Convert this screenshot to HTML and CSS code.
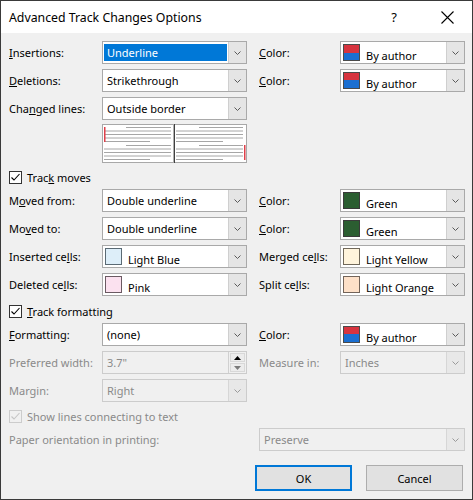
FILE: index.html
```html
<!DOCTYPE html>
<html>
<head>
<meta charset="utf-8">
<link rel="stylesheet" href="styles.css">
</head>
<body>
<div class="win">
  <div class="titlebar">
    <span class="title">Advanced Track Changes Options</span>
    <span class="help">?</span>
    <span class="close"><svg width="13" height="13" viewBox="0 0 13 13"><path d="M0.5 0.5 L12.5 12.5 M12.5 0.5 L0.5 12.5" stroke="#000" stroke-width="1.1" fill="none"/></svg></span>
  </div>
  <div class="content">
    <div class="grid">
      <span class="lbl"><u>I</u>nsertions:</span>
      <div class="sel"><span class="val"><span class="hl">Underline</span></span><span class="btn"><svg class="chev" width="7" height="4" viewBox="0 0 7 4"><polyline points="0.5,0.5 3.5,3.5 6.5,0.5"/></svg></span></div>
      <span class="lbl r"><u>C</u>olor:</span>
      <div class="sel"><span class="val c"><span class="sw author"></span><span class="cname">By author</span></span><span class="btn"><svg class="chev" width="7" height="4" viewBox="0 0 7 4"><polyline points="0.5,0.5 3.5,3.5 6.5,0.5"/></svg></span></div>

      <span class="lbl"><u>D</u>eletions:</span>
      <div class="sel"><span class="val">Strikethrough</span><span class="btn"><svg class="chev" width="7" height="4" viewBox="0 0 7 4"><polyline points="0.5,0.5 3.5,3.5 6.5,0.5"/></svg></span></div>
      <span class="lbl r"><u>C</u>olor:</span>
      <div class="sel"><span class="val c"><span class="sw author"></span><span class="cname">By author</span></span><span class="btn"><svg class="chev" width="7" height="4" viewBox="0 0 7 4"><polyline points="0.5,0.5 3.5,3.5 6.5,0.5"/></svg></span></div>

      <span class="lbl">Cha<u>n</u>ged lines:</span>
      <div class="sel"><span class="val">Outside border</span><span class="btn"><svg class="chev" width="7" height="4" viewBox="0 0 7 4"><polyline points="0.5,0.5 3.5,3.5 6.5,0.5"/></svg></span></div>
    </div>

    <div class="preview">
      <svg width="145" height="39" viewBox="0 0 145 39">
        <rect x="0.5" y="0.5" width="144" height="38" fill="#fff" stroke="#a8a8a8"/>
        <line x1="71.5" y1="0" x2="71.5" y2="39" stroke="#b0b0b0"/>
        <line x1="72.5" y1="0" x2="72.5" y2="39" stroke="#404040"/>
        <g stroke="#a6a6a6" stroke-width="1">
          <line x1="24" y1="3.5" x2="69" y2="3.5"/>
          <line x1="2" y1="7" x2="69" y2="7"/>
          <line x1="2" y1="10.5" x2="69" y2="10.5"/>
          <line x1="2" y1="14" x2="69" y2="14"/>
          <line x1="2" y1="17.5" x2="48" y2="17.5"/>
          <line x1="24" y1="21.5" x2="69" y2="21.5"/>
          <line x1="2" y1="25" x2="69" y2="25"/>
          <line x1="2" y1="28.5" x2="69" y2="28.5"/>
          <line x1="2" y1="32" x2="69" y2="32"/>
          <line x1="2" y1="35.5" x2="48" y2="35.5"/>

          <line x1="97" y1="3.5" x2="141" y2="3.5"/>
          <line x1="74" y1="7" x2="141" y2="7"/>
          <line x1="74" y1="10.5" x2="141" y2="10.5"/>
          <line x1="74" y1="14" x2="141" y2="14"/>
          <line x1="74" y1="17.5" x2="121" y2="17.5"/>
          <line x1="97" y1="21.5" x2="141" y2="21.5"/>
          <line x1="74" y1="25" x2="141" y2="25"/>
          <line x1="74" y1="28.5" x2="141" y2="28.5"/>
          <line x1="74" y1="32" x2="141" y2="32"/>
          <line x1="74" y1="35.5" x2="121" y2="35.5"/>
        </g>
        <rect x="2" y="3" width="1.5" height="15" fill="#e0404a"/>
        <rect x="142" y="21" width="1.5" height="15" fill="#e0404a"/>
      </svg>
    </div>

    <div class="check"><span class="cb"><svg width="11" height="11" viewBox="0 0 11 11"><polyline points="1.5,5.5 4,8 9.5,2" fill="none" stroke="#000" stroke-width="1.1"/></svg></span><span>Trac<u>k</u> moves</span></div>

    <div class="grid g2">
      <span class="lbl">M<u>o</u>ved from:</span>
      <div class="sel"><span class="val">Double underline</span><span class="btn"><svg class="chev" width="7" height="4" viewBox="0 0 7 4"><polyline points="0.5,0.5 3.5,3.5 6.5,0.5"/></svg></span></div>
      <span class="lbl r"><u>C</u>olor:</span>
      <div class="sel"><span class="val c"><span class="sw green"></span><span class="cname">Green</span></span><span class="btn"><svg class="chev" width="7" height="4" viewBox="0 0 7 4"><polyline points="0.5,0.5 3.5,3.5 6.5,0.5"/></svg></span></div>

      <span class="lbl">Mo<u>v</u>ed to:</span>
      <div class="sel"><span class="val">Double underline</span><span class="btn"><svg class="chev" width="7" height="4" viewBox="0 0 7 4"><polyline points="0.5,0.5 3.5,3.5 6.5,0.5"/></svg></span></div>
      <span class="lbl r"><u>C</u>olor:</span>
      <div class="sel"><span class="val c"><span class="sw green"></span><span class="cname">Green</span></span><span class="btn"><svg class="chev" width="7" height="4" viewBox="0 0 7 4"><polyline points="0.5,0.5 3.5,3.5 6.5,0.5"/></svg></span></div>

      <span class="lbl">Inserted ce<u>l</u>ls:</span>
      <div class="sel"><span class="val c"><span class="sw lblue"></span><span class="cname">Light Blue</span></span><span class="btn"><svg class="chev" width="7" height="4" viewBox="0 0 7 4"><polyline points="0.5,0.5 3.5,3.5 6.5,0.5"/></svg></span></div>
      <span class="lbl r">Merged ce<u>l</u>ls:</span>
      <div class="sel"><span class="val c"><span class="sw lyellow"></span><span class="cname">Light Yellow</span></span><span class="btn"><svg class="chev" width="7" height="4" viewBox="0 0 7 4"><polyline points="0.5,0.5 3.5,3.5 6.5,0.5"/></svg></span></div>

      <span class="lbl">Deleted ce<u>l</u>ls:</span>
      <div class="sel"><span class="val c"><span class="sw pink"></span><span class="cname">Pink</span></span><span class="btn"><svg class="chev" width="7" height="4" viewBox="0 0 7 4"><polyline points="0.5,0.5 3.5,3.5 6.5,0.5"/></svg></span></div>
      <span class="lbl r">Split ce<u>l</u>ls:</span>
      <div class="sel"><span class="val c"><span class="sw lorange"></span><span class="cname">Light Orange</span></span><span class="btn"><svg class="chev" width="7" height="4" viewBox="0 0 7 4"><polyline points="0.5,0.5 3.5,3.5 6.5,0.5"/></svg></span></div>
    </div>

    <div class="check tf"><span class="cb"><svg width="11" height="11" viewBox="0 0 11 11"><polyline points="1.5,5.5 4,8 9.5,2" fill="none" stroke="#000" stroke-width="1.1"/></svg></span><span><u>T</u>rack formatting</span></div>

    <div class="grid g3">
      <span class="lbl"><u>F</u>ormatting:</span>
      <div class="sel"><span class="val">(none)</span><span class="btn"><svg class="chev" width="7" height="4" viewBox="0 0 7 4"><polyline points="0.5,0.5 3.5,3.5 6.5,0.5"/></svg></span></div>
      <span class="lbl r"><u>C</u>olor:</span>
      <div class="sel"><span class="val c"><span class="sw author"></span><span class="cname">By author</span></span><span class="btn"><svg class="chev" width="7" height="4" viewBox="0 0 7 4"><polyline points="0.5,0.5 3.5,3.5 6.5,0.5"/></svg></span></div>

      <span class="lbl dis">Preferred width:</span>
      <div class="sel disabled"><span class="val">3.7"</span><span class="spin"><span class="up"><svg width="7" height="4" viewBox="0 0 7 4"><polygon points="0,4 3.5,0 7,4" fill="#000"/></svg></span><span class="dn"><svg width="7" height="4" viewBox="0 0 7 4"><polygon points="0,0 3.5,4 7,0" fill="#7a7a7a"/></svg></span></span></div>
      <span class="lbl r dis">Measure in:</span>
      <div class="sel disabled"><span class="val">Inches</span><span class="btn"><svg class="chev" width="7" height="4" viewBox="0 0 7 4"><polyline points="0.5,0.5 3.5,3.5 6.5,0.5"/></svg></span></div>

      <span class="lbl dis">Margin:</span>
      <div class="sel disabled"><span class="val">Right</span><span class="btn"><svg class="chev" width="7" height="4" viewBox="0 0 7 4"><polyline points="0.5,0.5 3.5,3.5 6.5,0.5"/></svg></span></div>
    </div>

    <div class="check off"><span class="cb"><svg width="11" height="11" viewBox="0 0 11 11"><polyline points="1.5,5.5 4,8 9.5,2" fill="none" stroke="#c4c4c4" stroke-width="1.1"/></svg></span><span>Show lines connecting to text</span></div>

    <div class="paper">
      <span class="lbl dis">Paper orientation in printing:</span>
      <div class="sel disabled wide"><span class="val">Preserve</span><span class="btn"><svg class="chev" width="7" height="4" viewBox="0 0 7 4"><polyline points="0.5,0.5 3.5,3.5 6.5,0.5"/></svg></span></div>
    </div>

    <div class="buttons">
      <button class="pb ok">OK</button>
      <button class="pb">Cancel</button>
    </div>
  </div>
</div>
</body>
</html>
```

FILE: styles.css
```css
* { box-sizing: border-box; }
html, body { margin: 0; padding: 0; }
body { background: #f0f0f0; }

.win {
  width: 473px;
  height: 500px;
  border: 1px solid #3a3a3a;
  background: #f0f0f0;
  font-family: "Noto Sans", "Open Sans", sans-serif;
  font-size: 11px;
  color: #000;
  overflow: hidden;
}

.titlebar {
  height: 32px;
  background: #fff;
  display: flex;
  align-items: center;
  padding-left: 8px;
}
.title { flex: 1; font-size: 12.3px; color: #000; }
.help { width: 20px; text-align: center; font-size: 13px; margin-right: 33px; }
.close { width: 20px; height: 13px; display: flex; justify-content: center; margin-right: 15px; }

.content { padding: 8px 8px 0 8px; }

.grid {
  display: grid;
  grid-template-columns: 93px 145px 93px 125px;
  grid-auto-rows: 23px;
  row-gap: 5px;
  align-items: center;
}
.g2 { margin-top: 4px; }
.g3 { margin-top: 4px; }

.lbl { white-space: nowrap; line-height: 15px; }
.lbl.r { padding-left: 12px; }
.lbl u, .check u { text-decoration-thickness: 1px; text-underline-offset: 1px; }
.dis { color: #8a8a8a; }

.sel {
  height: 23px;
  display: flex;
  border: 1px solid #a9a9a9;
  background: #fff;
}
.val {
  flex: 1;
  display: flex;
  align-items: center;
  padding-left: 4px;
  white-space: nowrap;
  line-height: 15px;
}
.hl {
  flex: 1;
  align-self: stretch;
  display: flex;
  align-items: center;
  margin: 2px 1px 2px -3px;
  padding-left: 3px;
  background: #0078d7;
  color: #fff;
}
.val.c { align-items: flex-start; padding: 2px 0 0 2px; }
.sw {
  width: 17px;
  height: 17px;
  border: 1px solid #555;
  flex: none;
}
.sw.author { background: linear-gradient(#d7343f 0, #d7343f 50%, #1b6fd1 50%, #1b6fd1 100%); border-color: #4a4a4a; }
.sw.green { background: #2b5e31; border-color: #3a3a3a; }
.sw.lblue { background: #ddeef9; border-color: #5a6a74; }
.sw.pink { background: #fbe1ef; border-color: #6a5a62; }
.sw.lyellow { background: #fff4dc; border-color: #70685a; }
.sw.lorange { background: #fde0c8; border-color: #72645a; }
.cname { margin-left: 6px; margin-top: 4px; }

.btn {
  width: 18px;
  flex: none;
  background: #e5e5e5;
  border-left: 1px solid #cfcfcf;
  display: flex;
  align-items: center;
  justify-content: center;
}
.chev polyline { fill: none; stroke: #5a5a5a; stroke-width: 1; }

.sel.disabled { background: #f0f0f0; border-color: #cccccc; color: #8a8a8a; }
.sel.disabled .btn { background: #e8e8e8; border-left-color: #d6d6d6; }
.sel.disabled .chev polyline { stroke: #9a9a9a; }

.spin {
  width: 18px;
  flex: none;
  display: flex;
  flex-direction: column;
  border-left: 1px solid #d0d0d0;
  padding: 1px 1px 1px 1px;
  gap: 1px;
}
.spin .up, .spin .dn {
  flex: 1;
  display: flex;
  align-items: center;
  justify-content: center;
  background: #ececec;
  border: 1px solid #d8d8d8;
}

.preview { margin: 4px 0 0 93px; height: 39px; }
.preview svg { display: block; }

.check {
  height: 16px;
  margin-top: 6px;
  display: flex;
  align-items: center;
  gap: 5px;
  line-height: 15px;
}
.check.tf { margin-top: 7px; }
.cb {
  width: 13px;
  height: 13px;
  border: 1px solid #333;
  background: #fff;
  display: flex;
  align-items: center;
  justify-content: center;
  flex: none;
}
.check.off { color: #8a8a8a; }
.check.off .cb { border-color: #cccccc; background: #f0f0f0; }

.paper {
  margin-top: 4px;
  display: grid;
  grid-template-columns: 238px 218px;
  align-items: center;
  height: 23px;
}
.sel.wide { margin-left: 12px; }

.buttons {
  margin-top: 14px;
  display: flex;
  justify-content: flex-end;
  gap: 14px;
  padding-right: 1px;
}
.pb {
  width: 97px;
  height: 26px;
  background: #e1e1e1;
  border: 1px solid #adadad;
  font-family: "Noto Sans", "Open Sans", sans-serif;
  font-size: 11px;
  color: #000;
  padding: 0;
}
.pb.ok { border-color: #0078d7; box-shadow: inset 0 0 0 1px #0078d7; }
```
